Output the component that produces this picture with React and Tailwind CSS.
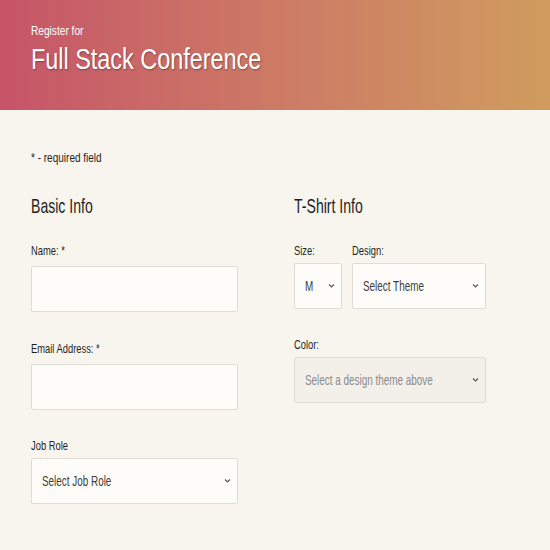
import React from "react";

const font = { fontFamily: '"Liberation Sans", Arial, sans-serif' };

// condensed text: the reference face is a narrow grotesk, so squeeze Liberation Sans
const Narrow = ({ children, className = "" }) => (
  <span className={`inline-block origin-left whitespace-nowrap ${className}`}>{children}</span>
);

const Chevron = () => (
  <svg width="7" height="5" viewBox="0 0 7 5" className="pointer-events-none absolute right-[6px] top-1/2 -translate-y-1/2">
    <path d="M1 1 L3.5 3.5 L6 1" fill="none" stroke="#555" strokeWidth="1.1" />
  </svg>
);

const Field = ({ label, children, className = "", gap = "mb-[7px]" }) => (
  <div className={className}>
    <label className={`block text-[13px] text-[#1e1e1e] leading-[16px] ${gap}`}>
      <Narrow className="scale-x-[0.72]">{label}</Narrow>
    </label>
    {children}
  </div>
);

const SelectBox = ({ text, disabled, className = "" }) => (
  <div
    className={`relative h-[46px] border border-[#e0dcd5] rounded-[2px] flex items-center pl-[10px] text-[15px] ${
      disabled ? "bg-[#f3efe9] text-[#8c8c8c]" : "bg-[#fdfcf8] text-[#3e3e3e]"
    } ${className}`}
  >
    <Narrow className="scale-x-[0.66]">{text}</Narrow>
    <Chevron />
  </div>
);

export default function App() {
  return (
    <div className="w-[550px] h-[550px] bg-[#f8f5ef] overflow-hidden" style={font}>
      <header className="h-[110px] bg-gradient-to-r from-[#c65468] to-[#d09c5e] px-[31px] pt-[23px]">
        <p className="text-white text-[13px] leading-[15px]">
          <Narrow className="scale-x-[0.78]">Register for</Narrow>
        </p>
        <h1 className="text-white text-[30px] leading-[36px] mt-[3px] [text-shadow:1px_1px_2px_rgba(0,0,0,0.35)]">
          <Narrow className="scale-x-[0.78]">Full Stack Conference</Narrow>
        </h1>
      </header>

      <div className="px-[31px]">
        <p className="text-[13px] text-[#1e1e1e] mt-[40px] leading-[16px]">
          <Narrow className="scale-x-[0.77]">* - required field</Narrow>
        </p>

        <div className="flex gap-[56px] mt-[28px]">
          <section className="w-[207px]">
            <h2 className="text-[21px] text-[#1e1e1e] leading-[24px]">
              <Narrow className="scale-x-[0.67]">Basic Info</Narrow>
            </h2>
            <Field label="Name: *" className="mt-[25px]">
              <input className="w-full h-[46px] bg-[#fdfcf8] border border-[#e0dcd5] rounded-[2px]" />
            </Field>
            <Field label="Email Address: *" className="mt-[29px]">
              <input className="w-full h-[46px] bg-[#fdfcf8] border border-[#e0dcd5] rounded-[2px]" />
            </Field>
            <Field label="Job Role" className="mt-[28px]" gap="mb-[4px]">
              <SelectBox text="Select Job Role" />
            </Field>
          </section>

          <section className="w-[192px]">
            <h2 className="text-[21px] text-[#1e1e1e] leading-[24px]">
              <Narrow className="scale-x-[0.67]">T-Shirt Info</Narrow>
            </h2>
            <div className="flex gap-[10px] mt-[25px]">
              <Field label="Size:" gap="mb-[4px]">
                <SelectBox text="M" className="w-[48px]" />
              </Field>
              <Field label="Design:" gap="mb-[4px]">
                <SelectBox text="Select Theme" className="w-[134px]" />
              </Field>
            </div>
            <Field label="Color:" className="mt-[28px]" gap="mb-[4px]">
              <SelectBox text="Select a design theme above" disabled />
            </Field>
          </section>
        </div>
      </div>
    </div>
  );
}
